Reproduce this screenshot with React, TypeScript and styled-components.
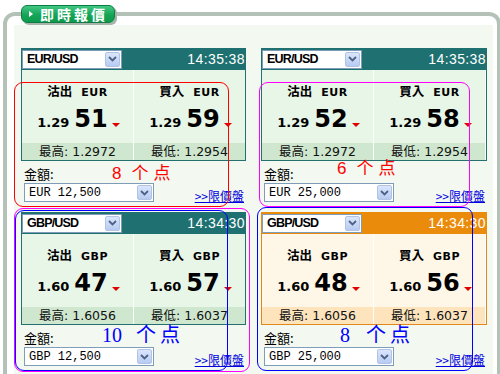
import React from 'react';
import styled, { createGlobalStyle } from 'styled-components';

type Tone = 'teal' | 'amber';

const palettes = {
  teal: { head: '#1f7171', body: '#e8f6e8', band: '#cfe7cf', edge: '#246f70' },
  amber: { head: '#eb8b0b', body: '#fef6e7', band: '#fde4bd', edge: '#e2881a' },
};

const GlobalStyle = createGlobalStyle`
  html, body {
    margin: 0;
    padding: 0;
    background: #fff;
    overflow: hidden;
  }
  body {
    font-family: "DejaVu Sans", "Noto Sans CJK TC", sans-serif;
    color: #000;
  }
`;

const Page = styled.div`
  position: relative;
  width: 500px;
  height: 374px;
  overflow: hidden;
  box-sizing: border-box;
  padding: 12px 0 0 3px;
`;

const Frame = styled.div`
  width: 498px;
  height: 362px;
  box-sizing: border-box;
  border: 4px solid #b3c1b6;
  border-bottom: none;
  border-radius: 12px 12px 0 0;
  background: #fff;
  padding: 9px 4px 0 7px;
`;

const Inner = styled.div`
  height: 100%;
  box-sizing: border-box;
  background: #f3f8f1;
  padding: 23px 6px 0 7px;
`;

const Tab = styled.div`
  position: absolute;
  left: 21px;
  top: 5px;
  width: 94px;
  height: 18px;
  box-sizing: border-box;
  border: 1px solid #0f7d42;
  border-radius: 6px;
  background: linear-gradient(#42c884, #16a457 55%, #0c9a4c);
  box-shadow: 2px 2px 0 #a9b5ac;
  display: flex;
  align-items: center;
  padding-left: 7px;
  gap: 7px;
  color: #fff;
  font-family: "Noto Sans CJK TC", sans-serif;
  font-size: 14px;
  font-weight: 700;
  letter-spacing: 3px;
  line-height: 16px;
`;

const TabArrow = styled.span`
  width: 0;
  height: 0;
  border-top: 3px solid transparent;
  border-bottom: 3px solid transparent;
  border-left: 4px solid #fff;
`;

const Grid = styled.div`
  display: grid;
  grid-template-columns: 225px 226px;
  column-gap: 15px;
  row-gap: 10px;
`;

const Quote = styled.div`
  display: flex;
  flex-direction: column;
`;

const Header = styled.div<{ $tone: Tone }>`
  height: 22px;
  background: ${p => palettes[p.$tone].head};
  display: flex;
  align-items: center;
  justify-content: space-between;
  padding: 0 1px;
`;

const SelectBox = styled.div<{ $width: number; $mono?: boolean }>`
  width: ${p => p.$width}px;
  height: 19px;
  box-sizing: border-box;
  background: #fff;
  border: 1px solid #7f9db9;
  display: flex;
  align-items: center;
  justify-content: space-between;
  padding: 0 1px 0 4px;
  font-family: ${p => (p.$mono ? '"Liberation Mono", monospace' : '"Liberation Sans", sans-serif')};
  font-size: ${p => (p.$mono ? 12 : 12.5)}px;
  font-weight: ${p => (p.$mono ? 400 : 700)};
  letter-spacing: ${p => (p.$mono ? 0 : -0.8)}px;
  color: #000;
`;

const DropButton = styled.span`
  width: 15px;
  height: 15px;
  box-sizing: border-box;
  border: 1px solid #b1c4e8;
  border-radius: 2px;
  background: linear-gradient(#dbe6fb, #b7cbf2);
  display: flex;
  align-items: center;
  justify-content: center;
`;

const Clock = styled.span`
  color: #fff;
  font-family: "Liberation Sans", sans-serif;
  font-size: 14px;
  letter-spacing: 0.4px;
  line-height: 16px;
`;

const Board = styled.div<{ $tone: Tone }>`
  display: grid;
  grid-template-columns: 111px 111px;
  column-gap: 1px;
  background: #fbfffb;
  border: 1px solid ${p => palettes[p.$tone].edge};
  border-top: none;
`;

const Side = styled.div<{ $tone: Tone }>`
  background: ${p => palettes[p.$tone].body};
  display: flex;
  flex-direction: column;
`;

const SideLabel = styled.div`
  height: 30px;
  box-sizing: border-box;
  padding-top: 13px;
  display: flex;
  justify-content: center;
  align-items: baseline;
  gap: 9px;
  font-family: "Noto Sans CJK TC", sans-serif;
  font-size: 12.5px;
  font-weight: 700;
  line-height: 16px;
`;

const Ccy = styled.span`
  font-family: "DejaVu Sans", sans-serif;
  font-size: 11px;
  font-weight: 700;
  letter-spacing: 0.5px;
`;

const PriceRow = styled.div`
  height: 43px;
  box-sizing: border-box;
  padding: 7px 0 0 2px;
  display: flex;
  justify-content: center;
  align-items: baseline;
  font-weight: 700;
`;

const Lead = styled.span`
  font-size: 13px;
  line-height: 24px;
`;

const Pips = styled.span`
  font-size: 24px;
  line-height: 24px;
  margin-left: 5px;
`;

const DownMark = styled.span`
  width: 0;
  height: 0;
  margin-left: 4px;
  border-left: 4px solid transparent;
  border-right: 4px solid transparent;
  border-top: 4px solid #e00000;
`;

const Band = styled.div<{ $tone: Tone }>`
  height: 17px;
  background: ${p => palettes[p.$tone].band};
  text-align: center;
  font-family: "DejaVu Sans", "Noto Sans CJK TC", sans-serif;
  font-size: 12.5px;
  line-height: 17px;
  color: #111;
`;

const AmountLabel = styled.div`
  height: 22px;
  box-sizing: border-box;
  padding: 5px 0 0 3px;
  font-family: "Noto Sans CJK TC", sans-serif;
  font-size: 13px;
  line-height: 16px;
`;

const AmountRow = styled.div`
  display: flex;
  justify-content: space-between;
  align-items: flex-end;
  padding: 0 2px 0 3px;
  height: 19px;
`;

const OrderLink = styled.a`
  font-family: "Noto Sans CJK TC", sans-serif;
  font-size: 12px;
  line-height: 14px;
  color: #0000dd;
  text-decoration: underline;
  margin-bottom: -1px;
  cursor: pointer;
`;

const Mark = styled.div<{ $color: string; $x: number; $y: number; $w: number; $h: number }>`
  position: absolute;
  left: ${p => p.$x}px;
  top: ${p => p.$y}px;
  width: ${p => p.$w}px;
  height: ${p => p.$h}px;
  box-sizing: border-box;
  border: 1px solid ${p => p.$color};
  border-radius: 9px;
  pointer-events: none;
`;

const Note = styled.div<{ $color: string; $x: number; $y: number; $serif?: boolean; $size: number; $gap: number }>`
  position: absolute;
  left: ${p => p.$x}px;
  top: ${p => p.$y}px;
  display: flex;
  align-items: baseline;
  gap: ${p => p.$gap}px;
  color: ${p => p.$color};
  font-family: ${p => (p.$serif ? '"Liberation Serif"' : '"Liberation Sans"')}, "Noto Sans CJK SC", sans-serif;
  font-size: ${p => p.$size}px;
  line-height: 20px;
  white-space: nowrap;
`;

const NoteNum = styled.span<{ $space: number }>`
  margin-right: ${p => p.$space}px;
`;

const Chevron = () => (
  <svg width="9" height="6" viewBox="0 0 9 6">
    <path d="M1 1 L4.5 4.5 L8 1" fill="none" stroke="#4d6185" strokeWidth="1.8" />
  </svg>
);

interface QuoteData {
  pair: string;
  time: string;
  ccy: string;
  lead: string;
  sell: string;
  buy: string;
  high: string;
  low: string;
  amount: string;
  tone: Tone;
}

const quotes: QuoteData[] = [
  { pair: 'EUR/USD', time: '14:35:38', ccy: 'EUR', lead: '1.29', sell: '51', buy: '59', high: '1.2972', low: '1.2954', amount: 'EUR 12,500', tone: 'teal' },
  { pair: 'EUR/USD', time: '14:35:38', ccy: 'EUR', lead: '1.29', sell: '52', buy: '58', high: '1.2972', low: '1.2954', amount: 'EUR 25,000', tone: 'teal' },
  { pair: 'GBP/USD', time: '14:34:30', ccy: 'GBP', lead: '1.60', sell: '47', buy: '57', high: '1.6056', low: '1.6037', amount: 'GBP 12,500', tone: 'teal' },
  { pair: 'GBP/USD', time: '14:34:30', ccy: 'GBP', lead: '1.60', sell: '48', buy: '56', high: '1.6056', low: '1.6037', amount: 'GBP 25,000', tone: 'amber' },
];

const QuoteCard: React.FC<{ q: QuoteData }> = ({ q }) => (
  <Quote>
    <Header $tone={q.tone}>
      <SelectBox $width={100}>
        <span>{q.pair}</span>
        <DropButton><Chevron /></DropButton>
      </SelectBox>
      <Clock>{q.time}</Clock>
    </Header>
    <Board $tone={q.tone}>
      <Side $tone={q.tone}>
        <SideLabel>沽出<Ccy>{q.ccy}</Ccy></SideLabel>
        <PriceRow>
          <Lead>{q.lead}</Lead>
          <Pips>{q.sell}</Pips>
          <DownMark />
        </PriceRow>
        <Band $tone={q.tone}>最高: {q.high}</Band>
      </Side>
      <Side $tone={q.tone}>
        <SideLabel>買入<Ccy>{q.ccy}</Ccy></SideLabel>
        <PriceRow>
          <Lead>{q.lead}</Lead>
          <Pips>{q.buy}</Pips>
          <DownMark />
        </PriceRow>
        <Band $tone={q.tone}>最低: {q.low}</Band>
      </Side>
    </Board>
    <AmountLabel>金額:</AmountLabel>
    <AmountRow>
      <SelectBox $width={130} $mono>
        <span>{q.amount}</span>
        <DropButton><Chevron /></DropButton>
      </SelectBox>
      <OrderLink>&gt;&gt;限價盤</OrderLink>
    </AmountRow>
  </Quote>
);

export default function App() {
  return (
    <Page>
      <GlobalStyle />
      <Frame>
        <Inner>
          <Grid>
            {quotes.map((q, i) => (
              <QuoteCard key={i} q={q} />
            ))}
          </Grid>
        </Inner>
      </Frame>
      <Tab>
        <TabArrow />
        即時報價
      </Tab>

      <Mark $color="#ff0000" $x={14} $y={82} $w={215} $h={125} />
      <Mark $color="#ff00ff" $x={259} $y={82} $w={211} $h={125} />
      <Mark $color="#ff00ff" $x={14} $y={208} $w={236} $h={164} />
      <Mark $color="#0000ff" $x={15} $y={210} $w={213} $h={161} />
      <Mark $color="#0000ff" $x={257} $y={207} $w={216} $h={164} />

      <Note $color="#ff0000" $x={112} $y={164} $size={17} $gap={5}>
        <NoteNum $space={5}>8</NoteNum>个<span>点</span>
      </Note>
      <Note $color="#ff0000" $x={337} $y={159} $size={17} $gap={5}>
        <NoteNum $space={5}>6</NoteNum>个<span>点</span>
      </Note>
      <Note $color="#0000ff" $x={102} $y={325} $size={20} $gap={4} $serif>
        <NoteNum $space={10}>10</NoteNum>个<span>点</span>
      </Note>
      <Note $color="#0000ff" $x={340} $y={325} $size={20} $gap={4} $serif>
        <NoteNum $space={12}>8</NoteNum>个<span>点</span>
      </Note>
    </Page>
  );
}
